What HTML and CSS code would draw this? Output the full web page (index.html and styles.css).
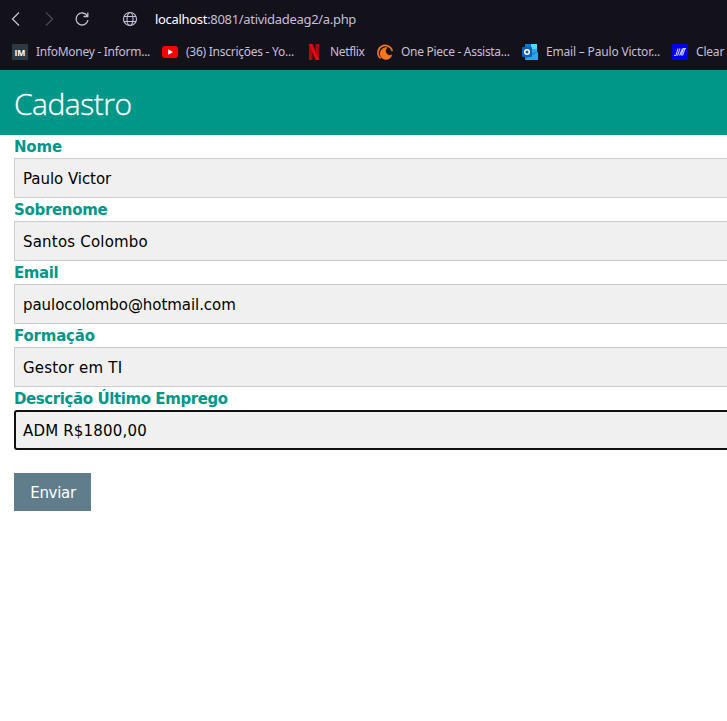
FILE: index.html
```html
<!DOCTYPE html>
<html lang="pt-BR">
<head>
<meta charset="utf-8">
<title>Cadastro</title>
<link rel="stylesheet" href="styles.css">
</head>
<body>
<div class="chrome">
  <nav class="toolbar">
    <svg class="tool" viewBox="0 0 16 16"><path d="M11 1.500 4.500 8l6.500 6.500"/></svg>
    <svg class="tool disabled" viewBox="0 0 16 16"><path d="M5 1.500 11.500 8 5 14.500"/></svg>
    <svg class="tool" viewBox="0 0 16 16"><path d="M13.300 5A6 6 0 1 0 14 9M13.800 1.500V5.500H9.500"/></svg>
    <svg class="tool globe" viewBox="0 0 16 16"><circle cx="8" cy="8" r="6.500"/><ellipse cx="8" cy="8" rx="3" ry="6.500"/><path d="M2 5.500h12M2 10.500h12"/></svg>
    <span class="url"><b>localhost</b>:8081/atividadeag2/a.php</span>
  </nav>
  <div class="bookmarks">
    <a class="bm"><svg viewBox="0 0 16 16"><path fill="#2d3a46" d="M0 0h16v16H0z"/><text class="im" x="2.500" y="11.500" textLength="11" lengthAdjust="spacingAndGlyphs">IM</text></svg><span class="t1">InfoMoney - Inform...</span></a>
    <a class="bm"><svg viewBox="0 0 16 16"><rect y="2" width="16" height="12" rx="3" fill="#f00"/><path d="m6.200 5.300 4.800 2.700-4.800 2.700z" fill="#fff"/></svg><span class="t2">(36) Inscrições - Yo...</span></a>
    <a class="bm"><svg viewBox="0 0 16 16"><path d="M3 0h3.500v16H3zM9.500 0H13v16H9.500z" fill="#b1060f"/><path d="M3 0h3.500L13 16H9.500z" fill="#e50914"/></svg><span class="t3">Netflix</span></a>
    <a class="bm"><svg viewBox="0 0 16 16"><path d="M3.700 14.300A7.200 7.200 0 1 1 15.200 7.200" fill="none" stroke="#f47521" stroke-width="1.600"/><path d="M10.800 3.600A6.200 6.200 0 1 0 15.200 10.300 3.400 3.400 0 0 1 10.800 3.600z" fill="#f47521"/></svg><span class="t4">One Piece - Assista...</span></a>
    <a class="bm"><svg viewBox="0 0 16 16"><path d="M3 0h12v10H3z" fill="#28a8ea"/><path d="M9 0h6v5H9z" fill="#50d9ff"/><path d="M3 0h6v5H3z" fill="#0078d4"/><path d="M3 8h13v8H3z" fill="#1490df"/><path d="m3 16 13-8v8z" fill="#28a8ea"/><rect y="3" width="10" height="10" rx="1" fill="#0f5fb5"/><circle cx="5" cy="8" r="2.300" fill="none" stroke="#fff" stroke-width="1.500"/></svg><span class="t5">Email – Paulo Victor...</span></a>
    <a class="bm"><svg viewBox="0 0 16 16"><rect width="16" height="16" rx="1.500" fill="#0000f5"/><path d="M2 11.500h2L6 4.500M5.500 11.500l2.500-7M7.500 11.500l3-7M9 11.500l2.500-7M11 4.500h3M10.500 11.500l2.500-7" fill="none" stroke="#c4c4ff" stroke-width="1.100"/></svg><span class="t6">Clear</span></a>
  </div>
</div>
<header class="banner"><h1>Cadastro</h1></header>
<form class="form">
  <label><span class="l1">Nome</span></label><div class="field"><span class="v1">Paulo Victor</span></div>
  <label><span class="l2">Sobrenome</span></label><div class="field"><span class="v2">Santos Colombo</span></div>
  <label><span class="l3">Email</span></label><div class="field"><span class="v3">paulocolombo@hotmail.com</span></div>
  <label><span class="l4">Formação</span></label><div class="field"><span class="v4">Gestor em TI</span></div>
  <label><span class="l5">Descrição Último Emprego</span></label><div class="field focused"><span class="v5">ADM R$1800,00</span></div>
  <button type="button" class="send">Enviar</button>
</form>
</body>
</html>
```
FILE: styles.css
```css
* { box-sizing: border-box; }
html, body { margin: 0; overflow: hidden; }
body { background: #fff; font: 15px/22.5px "DejaVu Sans", Verdana, sans-serif; color: #000; }
.chrome { height: 70px; background: #13111a; color: #c5bfdb; font: 13px/18px "Noto Sans", sans-serif; }
.toolbar { height: 38px; display: flex; align-items: center; padding-left: 8px; }
.tool { width: 16px; height: 16px; margin-right: 17px; fill: none; stroke: #c5bfdb; stroke-width: 1.3; flex: none; }
.disabled { stroke: #4b4755; }
.globe { margin-left: 15px; stroke-width: 1.1; }
.url { white-space: nowrap; letter-spacing: -.31px; }
.url b { font-weight: 400; color: #fff; }
.bookmarks { display: flex; gap: 12px; padding: 5px 0 0 12px; font-size: 12px; }
.bm { display: flex; flex: none; align-items: center; gap: 8px; height: 18px; white-space: nowrap; }
.bm svg { width: 16px; height: 16px; flex: none; }
.bm span { display: block; }
.im { font: bold 9px "Open Sans", sans-serif; fill: #fff; }
.t1 { width: 114px; letter-spacing: -.28px; }
.t2 { width: 108px; letter-spacing: -.26px; }
.t3 { width: 35px; letter-spacing: -.35px; }
.t4 { width: 109px; letter-spacing: -.3px; }
.t5 { width: 114px; letter-spacing: -.18px; }
.t6 { letter-spacing: -.2px; }
.banner { height: 65px; background: #009688; color: #fff; padding: 11px 14px 0; }
h1 { margin: 0; font: 300 30px/45px "Open Sans", sans-serif; letter-spacing: -.5px; -webkit-text-stroke: .3px #fff; }
.form { width: 760px; padding-left: 14px; }
label { display: block; height: 23px; line-height: 25px; color: #009688; font-weight: 700; }
.l1 { letter-spacing: -.2px; }
.l2 { letter-spacing: -.32px; }
.l3 { letter-spacing: -.4px; }
.l4 { letter-spacing: -.2px; }
.l5 { letter-spacing: -.41px; }
.field { height: 40px; border: 1px solid #ccc; background: #f0f0f0; padding: 0 8px; line-height: 40px; }
.v1 { letter-spacing: -.05px; }
.v2 { letter-spacing: .2px; }
.v3 { letter-spacing: -.06px; }
.v4 { letter-spacing: .2px; }
.v5 { letter-spacing: .18px; }
.focused { border: 2px solid #101010; border-radius: 3px; padding: 0 7px; line-height: 38px; }
.send { display: block; margin-top: 23px; width: 77px; height: 38px; border: 0; padding: 1px 0 0 1px; background: #607d8b; color: #fff; font: 15px/38px "DejaVu Sans", sans-serif; letter-spacing: -.3px; }
```
